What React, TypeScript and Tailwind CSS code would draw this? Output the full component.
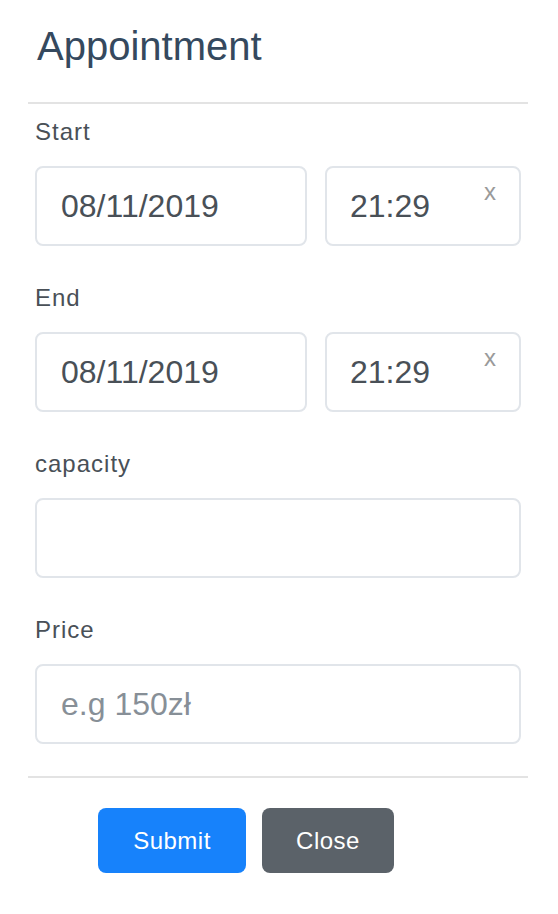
import React from "react";

function Field({ label, children }: { label: string; children: React.ReactNode }) {
    return (
        <div className="mb-[34px]">
            <label className="block mb-[16px] text-[24px] leading-[36px] tracking-[1px] text-[#495057]">{label}</label>
            {children}
        </div>
    );
}

function DateTimeRow({ date, time }: { date: string; time: string }) {
    return (
        <div className="flex gap-[18px]">
            <div className="w-[272px] h-[80px] border-2 border-[#e1e5ea] rounded-[8px] flex items-center pl-[24px] text-[32px] text-[#495057]">
                {date}
            </div>
            <div className="relative w-[196px] h-[80px] border-2 border-[#e1e5ea] rounded-[8px] flex items-center pl-[23px] text-[32px] text-[#495057]">
                {time}
                <span className="absolute right-[23px] top-[12px] text-[24px] leading-[24px] text-[#9a9a9a]">x</span>
            </div>
        </div>
    );
}

export default function App() {
    return (
        <div className="w-[558px] h-[914px] bg-white pl-[28px] pr-[30px] font-['Liberation_Sans',Arial,sans-serif]">
            <div className="h-[104px] border-b-2 border-[#e3e3e3] pt-[22px] pl-[9px]">
                <h5 className="text-[40px] leading-[48px] text-[#35495e]">Appointment</h5>
            </div>

            <div className="px-[7px] pt-[10px]">
                <Field label="Start">
                    <DateTimeRow date="08/11/2019" time="21:29" />
                </Field>
                <Field label="End">
                    <DateTimeRow date="08/11/2019" time="21:29" />
                </Field>
                <Field label="capacity">
                    <input className="w-[486px] h-[80px] border-2 border-[#e1e5ea] rounded-[8px] px-[24px] text-[32px] text-[#495057] outline-none" />
                </Field>
                <div className="mb-[32px]">
                    <label className="block mb-[16px] text-[24px] leading-[36px] tracking-[1px] text-[#495057]">Price</label>
                    <input
                        placeholder="e.g 150zł"
                        className="w-[486px] h-[80px] border-2 border-[#e1e5ea] rounded-[8px] px-[24px] text-[32px] text-[#495057] placeholder:text-[#878f97] outline-none"
                    />
                </div>
            </div>

            <div className="border-t-2 border-[#e3e3e3] pt-[30px] pl-[70px] flex gap-[16px]">
                <button className="w-[148px] h-[65px] rounded-[8px] bg-[#1782fb] text-white text-[24px] tracking-[0.5px]">Submit</button>
                <button className="w-[132px] h-[65px] rounded-[8px] bg-[#5b6269] text-white text-[24px] tracking-[0.5px]">Close</button>
            </div>
        </div>
    );
}
